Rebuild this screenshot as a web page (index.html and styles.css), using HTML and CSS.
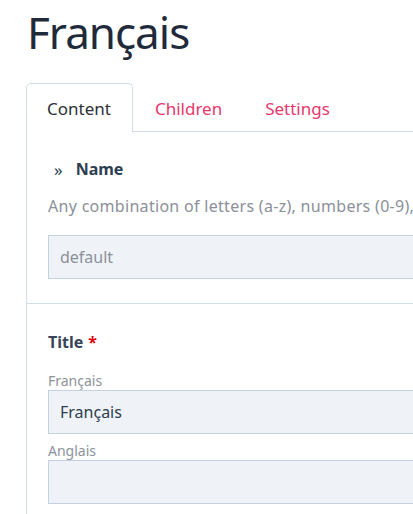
FILE: index.html
```html
<!DOCTYPE html>
<html>
<head>
<meta charset="utf-8">
<link rel="stylesheet" href="styles.css">
</head>
<body>
<div class="page">
  <h1 class="title">Français</h1>
  <div class="tabs">
    <div class="tab active">Content</div>
    <div class="tab">Children</div>
    <div class="tab">Settings</div>
    <div class="tab-rest"></div>
  </div>
  <div class="panel">
    <section class="field name-field">
      <div class="field-head"><span class="chev">»</span><span class="label">Name</span></div>
      <div class="help">Any combination of letters (a-z), numbers (0-9),</div>
      <div class="input placeholder">default</div>
    </section>
    <section class="field title-field">
      <div class="field-head"><span class="label">Title</span><span class="req">*</span></div>
      <div class="sublabel">Français</div>
      <div class="input">Français</div>
      <div class="sublabel">Anglais</div>
      <div class="input"></div>
    </section>
  </div>
</div>
</body>
</html>
```

FILE: styles.css
```css
html, body {
  margin: 0;
  padding: 0;
  background: #fff;
  overflow: hidden;
}
body {
  font-family: "Noto Sans", "Open Sans", sans-serif;
  color: #2c3e50;
}
.page {
  padding-left: 26px;
  width: 600px;
}
.title {
  margin: 0;
  padding: 4px 0 0 1px;
  font-size: 44px;
  font-weight: 400;
  letter-spacing: -1px;
  line-height: 56px;
  color: #1f2a3a;
  height: 79px;
}
.tabs {
  display: flex;
  height: 49px;
}
.tab {
  padding: 2px 21px 0 22px;
  line-height: 47px;
  font-size: 17px;
  color: #e8386d;
  border-bottom: 1px solid #d5dde8;
}
.tab.active {
  color: #2d3035;
  border: 1px solid #d5dde8;
  border-bottom: 1px solid transparent;
  border-radius: 5px 5px 0 0;
  padding: 2px 21px 0 20px;
  line-height: 46px;
  height: 46px;
}
.tab-rest {
  flex: 1;
  border-bottom: 1px solid #d5dde8;
}
.panel {
  border-left: 1px solid #d5dde8;
  height: 400px;
}
.field {
  padding: 0 0 0 21px;
}
.name-field {
  padding-top: 24px;
  padding-bottom: 24px;
  border-bottom: 1px solid #d5dde8;
}
.title-field {
  padding-top: 25px;
}
.field-head {
  display: flex;
  align-items: center;
  height: 26px;
  font-size: 16px;
  font-weight: 700;
}
.chev {
  font-weight: 400;
  margin-left: 6px;
  margin-right: 13px;
  font-size: 17px;
  color: #2c3e50;
}
.label {
  color: #2c3e50;
}
.title-field .label {
  color: #364558;
}
.req {
  color: #e3000f;
  margin-left: 5px;
}
.help {
  margin-top: 12px;
  font-size: 16px;
  letter-spacing: 0.3px;
  line-height: 24px;
  color: #8b9099;
  white-space: nowrap;
}
.input {
  box-sizing: border-box;
  height: 44px;
  background: #eff3f8;
  border: 1px solid #c3d1e2;
  padding: 0 11px;
  line-height: 42px;
  font-size: 16px;
  color: #2c3e50;
  width: 500px;
}
.name-field .input {
  margin-top: 17px;
}
.placeholder {
  color: #8b9099;
}
.sublabel {
  font-size: 14px;
  line-height: 19px;
  color: #8d939b;
}
.title-field .field-head + .sublabel {
  margin-top: 16px;
}
.title-field .input + .sublabel {
  margin-top: 7px;
}
```
